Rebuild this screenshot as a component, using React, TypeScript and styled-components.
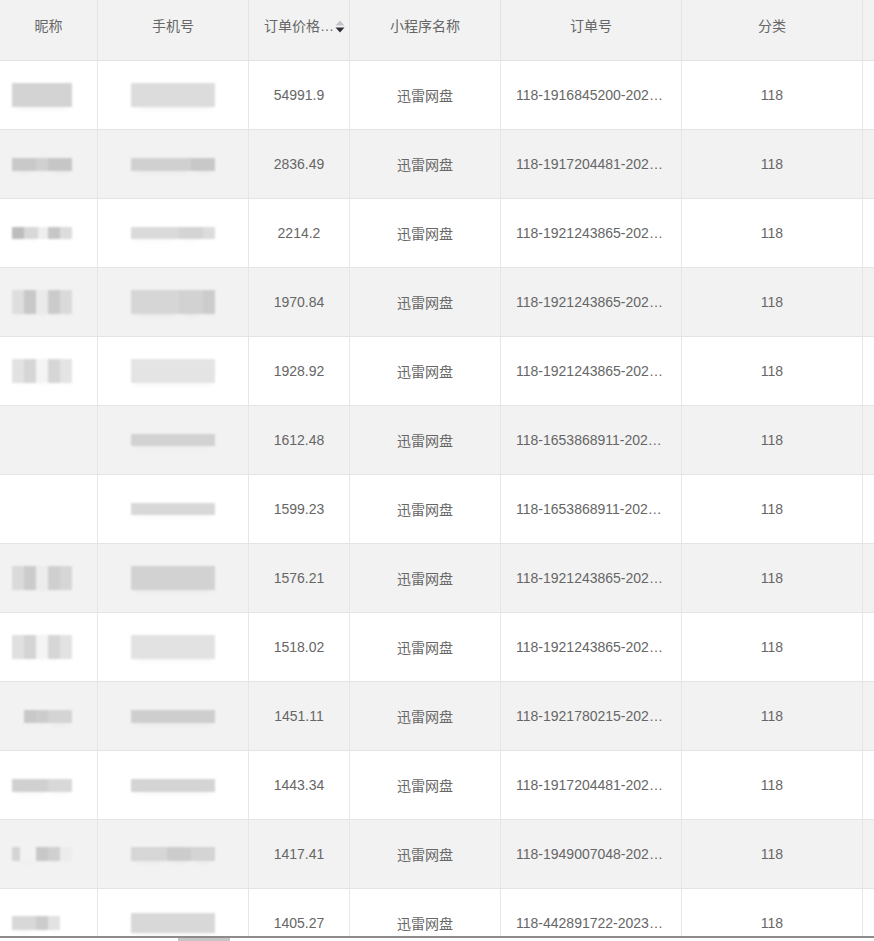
import React from "react";
import styled, { createGlobalStyle } from "styled-components";

type Seg = [number, string];

interface Masked {
  offset: number;
  h: number;
  segs: Seg[];
}

interface OrderRow {
  nick: Masked | null;
  phone: Masked;
  price: string;
  app: string;
  orderNo: string;
  category: string;
}

const COLUMNS = "98px 151px 101px 151px 181px 181px 160px";

const rows: OrderRow[] = [
  {
    nick: { offset: 12, h: 24, segs: [[60, "#d3d3d3"]] },
    phone: { offset: 0, h: 24, segs: [[84, "#dcdcdc"]] },
    price: "54991.9",
    app: "迅雷网盘",
    orderNo: "118-1916845200-20230412103322",
    category: "118",
  },
  {
    nick: { offset: 12, h: 13, segs: [[24, "#c9c9c9"], [12, "#d0d0d0"], [24, "#c6c6c6"]] },
    phone: { offset: 0, h: 13, segs: [[60, "#d0d0d0"], [24, "#c8c8c8"]] },
    price: "2836.49",
    app: "迅雷网盘",
    orderNo: "118-1917204481-20230411092210",
    category: "118",
  },
  {
    nick: { offset: 12, h: 12, segs: [[12, "#bdbdbd"], [14, "#d8d8d8"], [10, "#eeeeee"], [12, "#c6c6c6"], [12, "#dcdcdc"]] },
    phone: { offset: 0, h: 12, segs: [[48, "#dadada"], [24, "#d4d4d4"], [12, "#dcdcdc"]] },
    price: "2214.2",
    app: "迅雷网盘",
    orderNo: "118-1921243865-20230410211533",
    category: "118",
  },
  {
    nick: { offset: 12, h: 24, segs: [[12, "#dedede"], [12, "#c8c8c8"], [12, "#eaeaea"], [12, "#cbcbcb"], [12, "#dadada"]] },
    phone: { offset: 0, h: 24, segs: [[48, "#d6d6d6"], [24, "#d2d2d2"], [12, "#cccccc"]] },
    price: "1970.84",
    app: "迅雷网盘",
    orderNo: "118-1921243865-20230410184020",
    category: "118",
  },
  {
    nick: { offset: 12, h: 24, segs: [[12, "#e2e2e2"], [12, "#d6d6d6"], [12, "#f4f4f4"], [12, "#d6d6d6"], [12, "#e4e4e4"]] },
    phone: { offset: 0, h: 24, segs: [[84, "#e4e4e4"]] },
    price: "1928.92",
    app: "迅雷网盘",
    orderNo: "118-1921243865-20230409120818",
    category: "118",
  },
  {
    nick: null,
    phone: { offset: 0, h: 12, segs: [[84, "#d2d2d2"]] },
    price: "1612.48",
    app: "迅雷网盘",
    orderNo: "118-1653868911-20230408155901",
    category: "118",
  },
  {
    nick: null,
    phone: { offset: 0, h: 12, segs: [[84, "#d8d8d8"]] },
    price: "1599.23",
    app: "迅雷网盘",
    orderNo: "118-1653868911-20230408101247",
    category: "118",
  },
  {
    nick: { offset: 12, h: 24, segs: [[12, "#dadada"], [12, "#cbcbcb"], [12, "#ececec"], [12, "#cfcfcf"], [12, "#d6d6d6"]] },
    phone: { offset: 0, h: 24, segs: [[84, "#d2d2d2"]] },
    price: "1576.21",
    app: "迅雷网盘",
    orderNo: "118-1921243865-20230407223416",
    category: "118",
  },
  {
    nick: { offset: 12, h: 24, segs: [[12, "#e0e0e0"], [12, "#d4d4d4"], [12, "#f4f4f4"], [12, "#d6d6d6"], [12, "#e2e2e2"]] },
    phone: { offset: 0, h: 24, segs: [[84, "#e2e2e2"]] },
    price: "1518.02",
    app: "迅雷网盘",
    orderNo: "118-1921243865-20230407080933",
    category: "118",
  },
  {
    nick: { offset: 24, h: 13, segs: [[12, "#c8c8c8"], [12, "#cccccc"], [24, "#d4d4d4"]] },
    phone: { offset: 0, h: 13, segs: [[84, "#cecece"]] },
    price: "1451.11",
    app: "迅雷网盘",
    orderNo: "118-1921780215-20230406170522",
    category: "118",
  },
  {
    nick: { offset: 12, h: 13, segs: [[36, "#d0d0d0"], [24, "#d8d8d8"]] },
    phone: { offset: 0, h: 13, segs: [[84, "#d4d4d4"]] },
    price: "1443.34",
    app: "迅雷网盘",
    orderNo: "118-1917204481-20230406091145",
    category: "118",
  },
  {
    nick: { offset: 12, h: 14, segs: [[8, "#d4d4d4"], [16, "transparent"], [12, "#c8c8c8"], [12, "#d0d0d0"], [12, "#ececec"]] },
    phone: { offset: 0, h: 14, segs: [[36, "#d6d6d6"], [24, "#cccccc"], [24, "#d4d4d4"]] },
    price: "1417.41",
    app: "迅雷网盘",
    orderNo: "118-1949007048-20230405194430",
    category: "118",
  },
  {
    nick: { offset: 12, h: 14, segs: [[24, "#d8d8d8"], [12, "#cccccc"], [12, "#e2e2e2"]] },
    phone: { offset: 0, h: 20, segs: [[84, "#d8d8d8"]] },
    price: "1405.27",
    app: "迅雷网盘",
    orderNo: "118-442891722-20230405102838",
    category: "118",
  },
];

const GlobalStyle = createGlobalStyle`
  html, body {
    margin: 0;
    padding: 0;
    background: #ffffff;
    overflow: hidden;
  }
  * {
    box-sizing: border-box;
  }
`;

const MaskBlock: React.FC<{ mask: Masked }> = ({ mask }) => (
  <Mask $offset={mask.offset}>
    {mask.segs.map(([w, c], i) => (
      <MaskSeg key={i} $w={w} $h={mask.h} $c={c} />
    ))}
  </Mask>
);

const SortIcon = () => (
  <SortWrap>
    <svg width="10" height="13" viewBox="0 0 10 13">
      <path d="M5 0.5 L9.5 5.5 L0.5 5.5 Z" fill="#c0c4cc" />
      <path d="M0.5 7.5 L9.5 7.5 L5 12.5 Z" fill="#303133" />
    </svg>
  </SortWrap>
);

const App: React.FC = () => {
  return (
    <Page>
      <GlobalStyle />
      <TableArea>
        <HeaderRow>
          <HeadCell>昵称</HeadCell>
          <HeadCell>手机号</HeadCell>
          <HeadCell $sortable>
            <HeadTitle>订单价格(元)</HeadTitle>
            <SortIcon />
          </HeadCell>
          <HeadCell>小程序名称</HeadCell>
          <HeadCell>订单号</HeadCell>
          <HeadCell>分类</HeadCell>
          <HeadCell />
        </HeaderRow>
        {rows.map((r, i) => (
          <BodyRow key={i} $striped={i % 2 === 1}>
            <Cell $align="start">{r.nick && <MaskBlock mask={r.nick} />}</Cell>
            <Cell>
              <MaskBlock mask={r.phone} />
            </Cell>
            <Cell>{r.price}</Cell>
            <Cell>{r.app}</Cell>
            <Cell>
              <Ellipsis>{r.orderNo}</Ellipsis>
            </Cell>
            <Cell>{r.category}</Cell>
            <Cell />
          </BodyRow>
        ))}
      </TableArea>
      <ScrollTrack>
        <ScrollThumb />
      </ScrollTrack>
    </Page>
  );
};

const Page = styled.div`
  width: 874px;
  height: 941px;
  display: flex;
  flex-direction: column;
  overflow: hidden;
  font-family: "Liberation Sans", "Noto Sans CJK SC", sans-serif;
  font-size: 14px;
  color: #666666;
`;

const TableArea = styled.div`
  flex: 1;
  overflow: hidden;
  width: 874px;
`;

const HeaderRow = styled.div`
  display: grid;
  grid-template-columns: ${COLUMNS};
  height: 61px;
  background: #f2f2f2;
  border-bottom: 1px solid #e2e2e2;
`;

const HeadCell = styled.div<{ $sortable?: boolean }>`
  display: flex;
  justify-content: ${(p) => (p.$sortable ? "flex-start" : "center")};
  align-items: flex-start;
  padding: 16px 8px 0;
  padding-left: ${(p) => (p.$sortable ? "15px" : "8px")};
  padding-right: ${(p) => (p.$sortable ? "2px" : "8px")};
  line-height: 20px;
  border-right: 1px solid #e4e4e4;
  white-space: nowrap;
  overflow: hidden;
  min-width: 0;
`;

const HeadTitle = styled.span`
  max-width: 71px;
  overflow: hidden;
  text-overflow: ellipsis;
  white-space: nowrap;
`;

const SortWrap = styled.span`
  display: inline-flex;
  align-items: center;
  height: 20px;
  margin-left: 0;
  flex-shrink: 0;
`;

const BodyRow = styled.div<{ $striped: boolean }>`
  display: grid;
  grid-template-columns: ${COLUMNS};
  height: 69px;
  flex-shrink: 0;
  background: ${(p) => (p.$striped ? "#f2f2f2" : "#ffffff")};
  border-bottom: 1px solid #e4e4e4;
`;

const Cell = styled.div<{ $align?: "start" | "center" }>`
  display: flex;
  align-items: center;
  justify-content: ${(p) => (p.$align === "start" ? "flex-start" : "center")};
  padding: 0 15px;
  padding-left: ${(p) => (p.$align === "start" ? "0" : "15px")};
  border-right: 1px solid #e6e6e6;
  min-width: 0;
  overflow: hidden;
  white-space: nowrap;
`;

const Ellipsis = styled.span`
  display: block;
  width: 100%;
  overflow: hidden;
  text-overflow: ellipsis;
  white-space: nowrap;
  text-align: center;
`;

const Mask = styled.span<{ $offset: number }>`
  display: flex;
  margin-left: ${(p) => p.$offset}px;
  filter: blur(1px);
`;

const MaskSeg = styled.span<{ $w: number; $h: number; $c: string }>`
  display: block;
  width: ${(p) => p.$w}px;
  height: ${(p) => p.$h}px;
  background: ${(p) => p.$c};
  box-shadow: 0 6px 6px -4px rgba(0, 0, 0, 0.04);
`;

const ScrollTrack = styled.div`
  height: 5px;
  flex-shrink: 0;
  border-top: 2px solid #8c8c8c;
  background: #ffffff;
  padding-left: 178px;
`;

const ScrollThumb = styled.div`
  width: 52px;
  height: 3px;
  background: #c6c6c6;
`;

export default App;
